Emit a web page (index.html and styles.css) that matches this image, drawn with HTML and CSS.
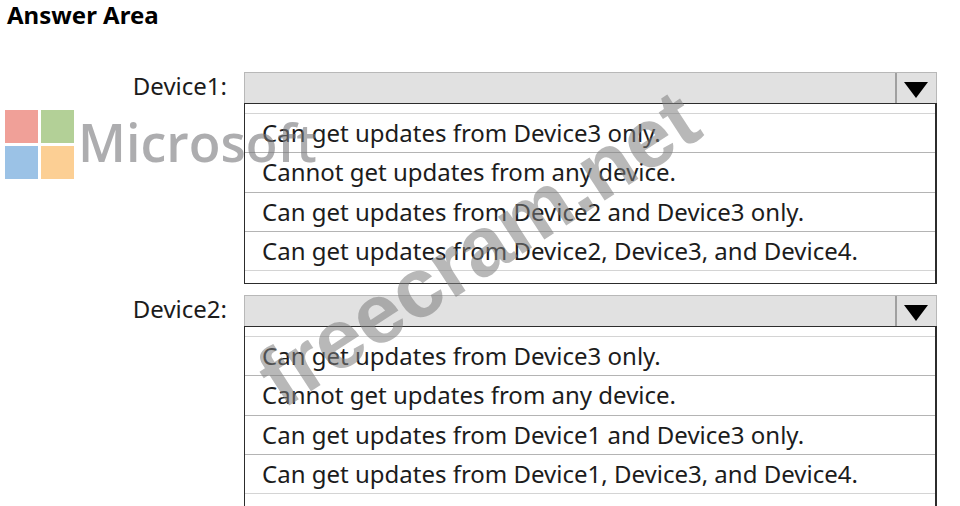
FILE: index.html
```html
<!DOCTYPE html>
<html lang="en">
<head>
<meta charset="utf-8">
<title>Answer Area</title>
<link rel="stylesheet" href="styles.css">
</head>
<body>
<main class="answer-area">
  <h1 class="title">Answer Area</h1>
  <form class="fields">
    <div class="field">
      <label class="label" for="device1">Device1:</label>
      <div class="dropdown">
        <div class="head">
          <select class="control" id="device1"><option></option></select>
          <span class="toggle"><svg class="arrow" viewBox="0 0 24 16"><path d="M0 0H24L12 16Z"/></svg></span>
        </div>
        <ul class="list">
          <li class="option">Can get updates from Device3 only.</li>
          <li class="option">Cannot get updates from any device.</li>
          <li class="option">Can get updates from Device2 and Device3 only.</li>
          <li class="option">Can get updates from Device2, Device3, and Device4.</li>
        </ul>
      </div>
    </div>
    <div class="field">
      <label class="label" for="device2">Device2:</label>
      <div class="dropdown">
        <div class="head">
          <select class="control" id="device2"><option></option></select>
          <span class="toggle"><svg class="arrow" viewBox="0 0 24 16"><path d="M0 0H24L12 16Z"/></svg></span>
        </div>
        <ul class="list">
          <li class="option">Can get updates from Device3 only.</li>
          <li class="option">Cannot get updates from any device.</li>
          <li class="option">Can get updates from Device1 and Device3 only.</li>
          <li class="option">Can get updates from Device1, Device3, and Device4.</li>
        </ul>
      </div>
    </div>
  </form>
  <div class="brand">
    <svg class="brand-mark" viewBox="0 0 69 69">
      <path fill="#f0a098" d="M0 0H33V33H0Z"/>
      <path fill="#b3d097" d="M36 0H69V33H36Z"/>
      <path fill="#9bc2e6" d="M0 36H33V69H0Z"/>
      <path fill="#fccf94" d="M36 36H69V69H36Z"/>
    </svg>
    <span class="brand-name">Microsoft</span>
  </div>
  <div class="watermark">freecram.net</div>
</main>
</body>
</html>
```
FILE: styles.css
```css
* {
  box-sizing: border-box;
}

html {
  overflow: hidden;
}

body {
  margin: 0;
  background: #fff;
  color: #1c1c1c;
  font-family: "Noto Sans", "Open Sans", sans-serif;
}

.answer-area {
  position: relative;
}

.title {
  margin: 0;
  padding: 0 7px;
  color: #000;
  font-size: 24px;
  line-height: 30px;
}

.fields {
  display: grid;
  gap: 11px;
  padding: 42px 23px 0 0;
}

.field {
  display: grid;
  grid-template-columns: 227px 1fr;
  gap: 17px;
}

.label {
  font-size: 24px;
  line-height: 28px;
  text-align: right;
}

.head {
  display: flex;
  height: 31px;
  border: 1px solid #b8b8b8;
  border-bottom: 0;
  background: #e1e1e1;
}

.control {
  flex: 1;
  min-width: 0;
  border: 0;
  background: transparent;
  appearance: none;
}

.toggle {
  display: flex;
  align-items: center;
  justify-content: center;
  width: 41px;
  padding: 3px 2px 0 0;
  border-left: 2px solid #a0a0a0;
}

.arrow {
  width: 24px;
  height: 16px;
}

.list {
  margin: 0;
  padding: 9px 0 12px;
  border: 1px solid #2c2c2c;
  border-right-width: 2px;
  list-style: none;
}

.option {
  height: 40px;
  padding: 0 17px;
  border-top: 1px solid #b4b4b4;
  font-size: 24px;
  line-height: 38px;
  white-space: nowrap;
}

.option:nth-child(odd) {
  height: 39px;
}

.option:first-child {
  border-top-color: #d4d4d4;
}

.option:last-child {
  border-bottom: 1px solid #d4d4d4;
}

.brand {
  position: absolute;
  top: 110px;
  left: 5px;
  display: flex;
  gap: 4px;
}

.brand-mark {
  width: 69px;
  height: 69px;
}

.brand-name {
  color: rgb(118 118 122 / 60%);
  font-family: "Open Sans", sans-serif;
  font-size: 52px;
  font-weight: 600;
  line-height: 64px;
}

.watermark {
  position: absolute;
  top: 202px;
  left: 226px;
  color: rgb(125 125 125 / 55%);
  font-family: "Liberation Sans", sans-serif;
  font-size: 84px;
  font-weight: 700;
  line-height: 92px;
  transform: rotate(-33deg);
}
```
